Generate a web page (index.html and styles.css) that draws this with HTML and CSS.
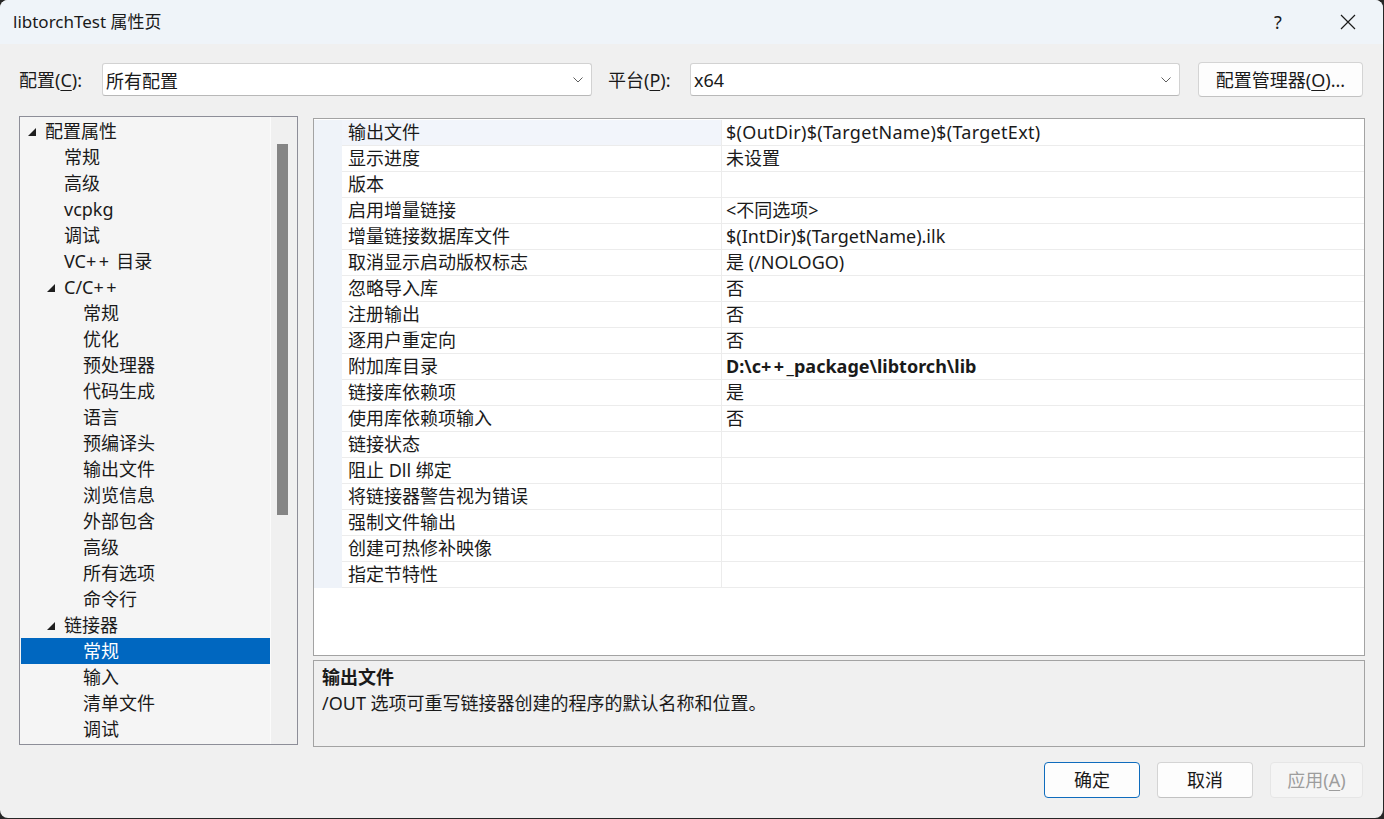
FILE: index.html
```html
<!DOCTYPE html>
<html lang="zh-CN">
<head>
<meta charset="utf-8">
<title>libtorchTest 属性页</title>
<link rel="stylesheet" href="styles.css">
</head>
<body>
<div class="window">
  <div class="titlebar">
    <span class="title">libtorchTest 属性页</span>
    <span class="help">?</span>
    <span class="close">
      <svg width="16" height="16" viewBox="0 0 16 16"><path d="M1 1 L15 15 M15 1 L1 15" stroke="#1a1a1a" stroke-width="1.2" fill="none"/></svg>
    </span>
  </div>
  <div class="content">
    <div class="toprow">
      <label class="lbl lbl-config">配置(<u>C</u>):</label>
      <div class="combo">
        <span>所有配置</span>
        <svg class="chev" width="10" height="6" viewBox="0 0 10 6"><path d="M0.5 0.5 L5 5 L9.5 0.5" stroke="#5f5f5f" stroke-width="1" fill="none"/></svg>
      </div>
      <label class="lbl lbl-platform">平台(<u>P</u>):</label>
      <div class="combo">
        <span>x64</span>
        <svg class="chev" width="10" height="6" viewBox="0 0 10 6"><path d="M0.5 0.5 L5 5 L9.5 0.5" stroke="#5f5f5f" stroke-width="1" fill="none"/></svg>
      </div>
      <button class="btn btn-manager">配置管理器(<u>O</u>)...</button>
    </div>

    <div class="main">
      <div class="tree">
        <div class="tree-list">
          <div class="node l0"><span class="exp"><svg width="8" height="8" viewBox="0 0 8 8"><polygon points="8,0 8,8 0,8" fill="#1e1e1e"/></svg></span>配置属性</div>
          <div class="node l1"><span class="exp"></span>常规</div>
          <div class="node l1"><span class="exp"></span>高级</div>
          <div class="node l1"><span class="exp"></span>vcpkg</div>
          <div class="node l1"><span class="exp"></span>调试</div>
          <div class="node l1"><span class="exp"></span>VC<span class="pp">++</span> 目录</div>
          <div class="node l1"><span class="exp"><svg width="8" height="8" viewBox="0 0 8 8"><polygon points="8,0 8,8 0,8" fill="#1e1e1e"/></svg></span>C/C<span class="pp">++</span></div>
          <div class="node l2"><span class="exp"></span>常规</div>
          <div class="node l2"><span class="exp"></span>优化</div>
          <div class="node l2"><span class="exp"></span>预处理器</div>
          <div class="node l2"><span class="exp"></span>代码生成</div>
          <div class="node l2"><span class="exp"></span>语言</div>
          <div class="node l2"><span class="exp"></span>预编译头</div>
          <div class="node l2"><span class="exp"></span>输出文件</div>
          <div class="node l2"><span class="exp"></span>浏览信息</div>
          <div class="node l2"><span class="exp"></span>外部包含</div>
          <div class="node l2"><span class="exp"></span>高级</div>
          <div class="node l2"><span class="exp"></span>所有选项</div>
          <div class="node l2"><span class="exp"></span>命令行</div>
          <div class="node l1"><span class="exp"><svg width="8" height="8" viewBox="0 0 8 8"><polygon points="8,0 8,8 0,8" fill="#1e1e1e"/></svg></span>链接器</div>
          <div class="node l2 selected"><span class="exp"></span>常规</div>
          <div class="node l2"><span class="exp"></span>输入</div>
          <div class="node l2"><span class="exp"></span>清单文件</div>
          <div class="node l2"><span class="exp"></span>调试</div>
        </div>
        <div class="scrollbar"><div class="thumb"></div></div>
      </div>

      <div class="right">
        <div class="grid">
          <div class="row current"><span class="gut"></span><span class="name">输出文件</span><span class="val lat">$(OutDir)$(TargetName)$(TargetExt)</span></div>
          <div class="row"><span class="gut"></span><span class="name">显示进度</span><span class="val">未设置</span></div>
          <div class="row"><span class="gut"></span><span class="name">版本</span><span class="val"></span></div>
          <div class="row"><span class="gut"></span><span class="name">启用增量链接</span><span class="val">&lt;不同选项&gt;</span></div>
          <div class="row"><span class="gut"></span><span class="name">增量链接数据库文件</span><span class="val">$(IntDir)$(TargetName).ilk</span></div>
          <div class="row"><span class="gut"></span><span class="name">取消显示启动版权标志</span><span class="val">是 (/NOLOGO)</span></div>
          <div class="row"><span class="gut"></span><span class="name">忽略导入库</span><span class="val">否</span></div>
          <div class="row"><span class="gut"></span><span class="name">注册输出</span><span class="val">否</span></div>
          <div class="row"><span class="gut"></span><span class="name">逐用户重定向</span><span class="val">否</span></div>
          <div class="row"><span class="gut"></span><span class="name">附加库目录</span><span class="val bold">D:\c<span class="pp">++</span>_package\libtorch\lib</span></div>
          <div class="row"><span class="gut"></span><span class="name">链接库依赖项</span><span class="val">是</span></div>
          <div class="row"><span class="gut"></span><span class="name">使用库依赖项输入</span><span class="val">否</span></div>
          <div class="row"><span class="gut"></span><span class="name">链接状态</span><span class="val"></span></div>
          <div class="row"><span class="gut"></span><span class="name">阻止 Dll 绑定</span><span class="val"></span></div>
          <div class="row"><span class="gut"></span><span class="name">将链接器警告视为错误</span><span class="val"></span></div>
          <div class="row"><span class="gut"></span><span class="name">强制文件输出</span><span class="val"></span></div>
          <div class="row"><span class="gut"></span><span class="name">创建可热修补映像</span><span class="val"></span></div>
          <div class="row"><span class="gut"></span><span class="name">指定节特性</span><span class="val"></span></div>
        </div>
        <div class="desc">
          <div class="desc-title">输出文件</div>
          <div class="desc-text">/OUT 选项可重写链接器创建的程序的默认名称和位置。</div>
        </div>
      </div>
    </div>

    <div class="buttons">
      <button class="btn btn-ok">确定</button>
      <button class="btn btn-cancel">取消</button>
      <button class="btn btn-apply" disabled>应用(<u>A</u>)</button>
    </div>
  </div>
</div>
</body>
</html>
```

FILE: styles.css
```css
* { box-sizing: border-box; }

html, body {
  margin: 0;
  padding: 0;
  width: 1384px;
  height: 819px;
  overflow: hidden;
  background: #262626;
}

body {
  font-family: "Noto Sans", "Noto Sans CJK SC", sans-serif;
  font-size: 18px;
  color: #1a1a1a;
}

.window {
  width: 1383px;
  height: 818px;
  background: #f0f0f0;
  border-radius: 8px;
  overflow: hidden;
  display: flex;
  flex-direction: column;
}

.titlebar {
  height: 44px;
  flex: none;
  background: #eff4f9;
  display: flex;
  align-items: center;
  padding-left: 13px;
}

.title {
  flex: 1;
  font-size: 17px;
  line-height: 24px;
}

.help {
  width: 20px;
  text-align: center;
  margin-right: 52px;
  line-height: 24px;
}

.close {
  width: 16px;
  height: 16px;
  margin-right: 27px;
  display: flex;
}

.content {
  flex: 1;
  display: flex;
  flex-direction: column;
}

.toprow {
  margin-top: 18px;
  height: 35px;
  display: flex;
  align-items: center;
  padding-left: 19px;
}

.lbl {
  line-height: 24px;
}
.lbl-config { width: 83px; }
.lbl-platform { width: 82px; margin-left: 16px; }

u { text-decoration-thickness: 1px; text-underline-offset: 3px; }

.pp { letter-spacing: 2.5px; }

.combo {
  width: 490px;
  height: 33px;
  background: #ffffff;
  border: 1px solid #d2d2d2;
  border-bottom-color: #b8b8b8;
  border-radius: 3px;
  display: flex;
  align-items: center;
  padding-left: 3px;
  padding-right: 8px;
}
.combo span { flex: 1; }
.chev { flex: none; }

.btn {
  font-family: inherit;
  font-size: 18px;
  color: #1a1a1a;
  background: #fdfdfd;
  border: 1px solid #d4d4d4;
  border-bottom-color: #c2c2c2;
  border-radius: 4px;
  padding: 0;
  line-height: 24px;
}

.btn-manager {
  width: 165px;
  height: 35px;
  margin-left: 18px;
}

.main {
  margin-top: 19px;
  display: flex;
  padding-left: 19px;
}

.tree {
  width: 279px;
  height: 629px;
  border: 1px solid #8d8e98;
  background: #f5f5f5;
  display: flex;
}

.tree-list {
  width: 251px;
  padding-top: 1px;
  padding-left: 1px;
  border-right: 1px solid #fbfbfb;
}

.node {
  height: 26px;
  line-height: 26px;
  display: flex;
  align-items: center;
  white-space: pre;
}
.node.l0 { padding-left: 7px; }
.node.l1 { padding-left: 26px; }
.node.l2 { padding-left: 45px; }

.exp {
  width: 17px;
  flex: none;
  display: flex;
  align-items: center;
  height: 26px;
}
.exp svg { margin-top: 1px; }

.node.selected {
  background: #0067c0;
  color: #ffffff;
}

.scrollbar {
  flex: 1;
  background: #f0f0f0;
  padding-top: 27px;
  padding-left: 6px;
}
.thumb {
  width: 11px;
  height: 371px;
  background: #858585;
}

.right {
  margin-left: 15px;
  margin-top: 2px;
  width: 1052px;
  display: flex;
  flex-direction: column;
  gap: 4px;
}

.grid {
  height: 538px;
  background: #ffffff;
  border: 1px solid #a3a3a3;
  padding-top: 1px;
}

.row {
  display: flex;
  height: 26px;
}
.gut {
  width: 28px;
  flex: none;
  background: #eff3f9;
}
.name {
  width: 380px;
  flex: none;
  padding-left: 6px;
  line-height: 25px;
  border-right: 1px solid #ececec;
  border-bottom: 1px solid #ececec;
  white-space: nowrap;
}
.val {
  flex: 1;
  padding-left: 4px;
  line-height: 25px;
  border-bottom: 1px solid #ececec;
  white-space: nowrap;
}
.val.lat { letter-spacing: 0.3px; }
.val.bold { font-weight: bold; }
.row.current .name { background: #f2f5fb; }

.desc {
  height: 87px;
  border: 1px solid #a3a3a3;
  background: #f0f0f0;
  padding: 3px 8px 0;
}
.desc-title {
  font-weight: bold;
  line-height: 26px;
}
.desc-text {
  line-height: 26px;
}

.buttons {
  margin-top: 15px;
  display: flex;
  justify-content: flex-end;
  gap: 17px;
  padding-right: 20px;
}
.buttons .btn {
  width: 96px;
  height: 36px;
}
.btn-ok {
  border: 1px solid #0f6cbd;
}
.buttons .btn-apply {
  width: 93px;
  background: #f5f5f5;
  border-color: #e6e6e6;
  color: #9d9d9d;
}
```
